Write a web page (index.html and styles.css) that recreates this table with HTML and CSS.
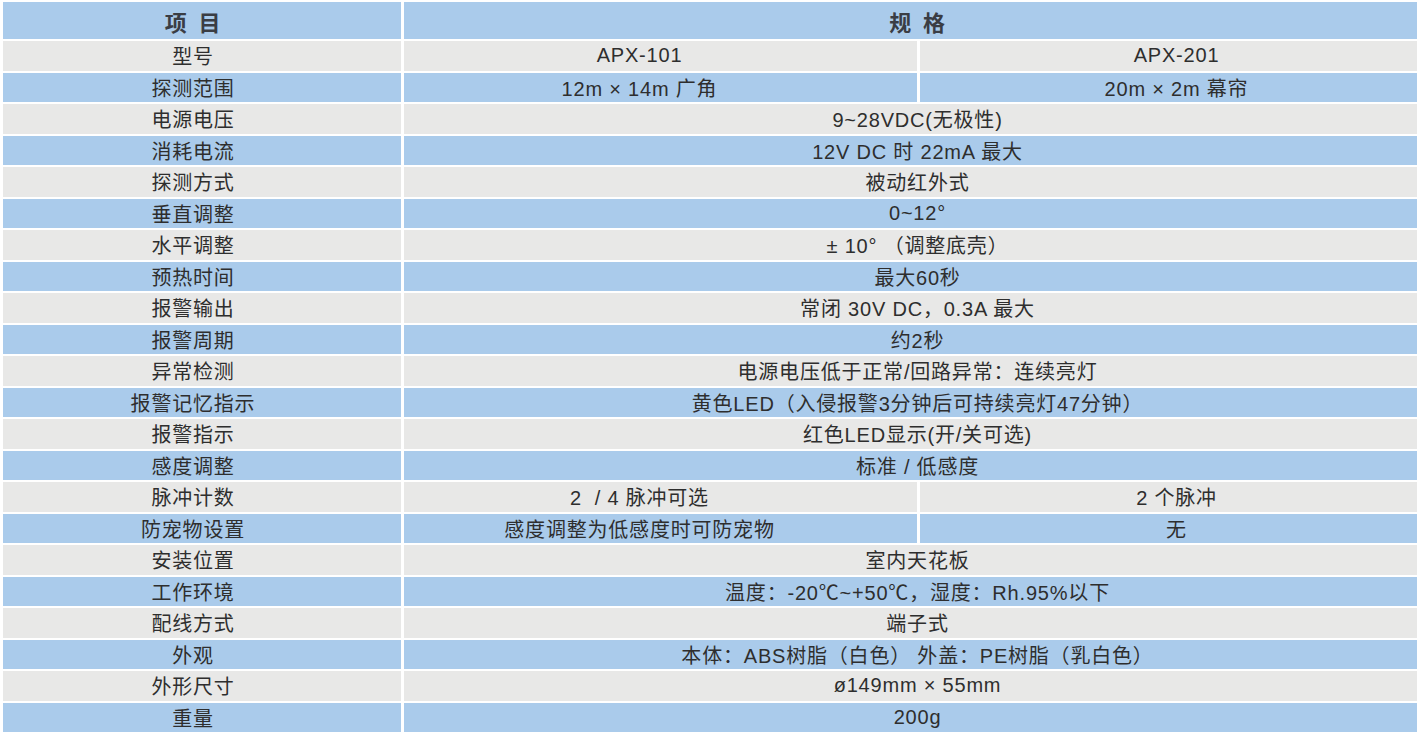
FILE: index.html
```html
<!DOCTYPE html>
<html lang="zh-CN">
<head>
<meta charset="utf-8">
<title>规格</title>
<link rel="stylesheet" href="styles.css">
</head>
<body>
<div class="spec">
  <div class="cell head c1">项 目</div>
  <div class="cell head span">规 格</div>

  <div class="cell gray c1">型号</div>
  <div class="cell gray c2a">APX-101</div>
  <div class="cell gray c2b">APX-201</div>

  <div class="cell blue c1">探测范围</div>
  <div class="cell blue c2a">12m × 14m 广角</div>
  <div class="cell blue c2b">20m × 2m 幕帘</div>

  <div class="cell gray c1">电源电压</div>
  <div class="cell gray span">9~28VDC(无极性)</div>

  <div class="cell blue c1">消耗电流</div>
  <div class="cell blue span">12V DC 时 22mA 最大</div>

  <div class="cell gray c1">探测方式</div>
  <div class="cell gray span">被动红外式</div>

  <div class="cell blue c1">垂直调整</div>
  <div class="cell blue span">0~12°</div>

  <div class="cell gray c1">水平调整</div>
  <div class="cell gray span">± 10° （调整底壳）</div>

  <div class="cell blue c1">预热时间</div>
  <div class="cell blue span">最大60秒</div>

  <div class="cell gray c1">报警输出</div>
  <div class="cell gray span">常闭 30V DC，0.3A 最大</div>

  <div class="cell blue c1">报警周期</div>
  <div class="cell blue span">约2秒</div>

  <div class="cell gray c1">异常检测</div>
  <div class="cell gray span">电源电压低于正常/回路异常：连续亮灯</div>

  <div class="cell blue c1">报警记忆指示</div>
  <div class="cell blue span">黄色LED（入侵报警3分钟后可持续亮灯47分钟）</div>

  <div class="cell gray c1">报警指示</div>
  <div class="cell gray span">红色LED显示(开/关可选)</div>

  <div class="cell blue c1">感度调整</div>
  <div class="cell blue span">标准 / 低感度</div>

  <div class="cell gray c1">脉冲计数</div>
  <div class="cell gray c2a">2 &nbsp;/ 4 脉冲可选</div>
  <div class="cell gray c2b">2 个脉冲</div>

  <div class="cell blue c1">防宠物设置</div>
  <div class="cell blue c2a">感度调整为低感度时可防宠物</div>
  <div class="cell blue c2b">无</div>

  <div class="cell gray c1">安装位置</div>
  <div class="cell gray span">室内天花板</div>

  <div class="cell blue c1">工作环境</div>
  <div class="cell blue span">温度：-20℃~+50℃，湿度：Rh.95%以下</div>

  <div class="cell gray c1">配线方式</div>
  <div class="cell gray span">端子式</div>

  <div class="cell blue c1">外观</div>
  <div class="cell blue span">本体：ABS树脂（白色） 外盖：PE树脂（乳白色）</div>

  <div class="cell gray c1">外形尺寸</div>
  <div class="cell gray span">ø149mm × 55mm</div>

  <div class="cell blue c1">重量</div>
  <div class="cell blue span">200g</div>
</div>
</body>
</html>
```

FILE: styles.css
```css
html, body {
  margin: 0;
  padding: 0;
  background: #ffffff;
}

body {
  padding: 2px 0 0 3px;
  font-family: "Liberation Sans", "Noto Sans CJK SC", sans-serif;
  color: #2e2e2e;
}

.spec {
  display: grid;
  width: 1414px;
  grid-template-columns: 398px 513px 497px;
  grid-template-rows: 37px repeat(22, 29.5px);
  column-gap: 3px;
  row-gap: 2px;
}

.cell {
  display: flex;
  align-items: center;
  justify-content: center;
  font-size: 20px;
  letter-spacing: 0.8px;
  white-space: nowrap;
}

.blue { background: #aacbeb; }
.gray { background: #e8e8e7; }

.head {
  background: #aacbeb;
  font-size: 22px;
  font-weight: bold;
  color: #3a3d44;
  word-spacing: 4px;
}

.c1 {
  grid-column: 1;
  padding-right: 18px;
}

.c2a {
  grid-column: 2;
  padding-right: 42px;
}

.c2b {
  grid-column: 3;
  padding-left: 16px;
}

.span {
  grid-column: 2 / 4;
  padding-left: 14px;
}
```
